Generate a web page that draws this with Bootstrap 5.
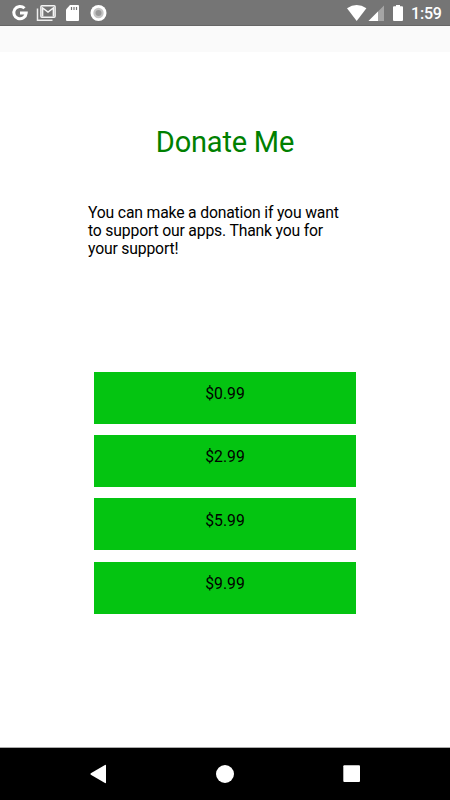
<!DOCTYPE html>
<html lang="en">
<head>
<meta charset="utf-8">
<meta name="viewport" content="width=device-width, initial-scale=1">
<title>Donate Me</title>
<link href="https://cdn.jsdelivr.net/npm/bootstrap@5.3.0/dist/css/bootstrap.min.css" rel="stylesheet">
<style>
body { font-family: Roboto, sans-serif; color: #000; background: #fff; }
.screen { width: 450px; height: 800px; }
.status-bar { height: 26px; background: #757575; border-bottom: 1px solid #666; }
.status-bar svg, .nav-keys svg { display: block; width: 100%; height: 100%; }
.status-left { width: 120px; }
.status-right { width: 66px; }
.clock { font-size: 16px; font-weight: 500; line-height: 28px; width: 39px; color: #fff; letter-spacing: -.2px; }
.app-strip { height: 26px; background: #fafafa; }
.donate-title { font-size: 29px; line-height: 36px; margin-top: 72px; color: #008000; font-weight: 400; letter-spacing: -.2px; }
.donate-text { font-size: 15.75px; line-height: 18px; width: 274px; margin-top: 44px; letter-spacing: -.18px; }
.price-list { width: 262px; margin-top: 113.6px; gap: 11.4px; }
.price-btn { height: 52px; padding: 11.2px 0 0; border: 0; border-radius: 0; background: #04c411; color: #000; font-size: 15.75px; line-height: 22px; }
.price-btn:hover { background: #04b010; color: #000; }
.nav-keys { height: 53px; background: #000; border-top: 1px solid #aaa; }
</style>
</head>
<body>
<div class="screen d-flex flex-column overflow-hidden">
  <header class="status-bar d-flex justify-content-between flex-shrink-0">
    <div class="status-left">
      <svg viewBox="0 0 120 25" fill="none">
        <path d="M24.5 8.3A6.2 6.2 0 1 0 26.2 13.1H20" stroke="#fff" stroke-width="3"/>
        <path d="M37.5 8.5V20.3H52.5" stroke="#eee" stroke-width="1.5"/>
        <rect x="40.9" y="5.7" width="14.2" height="11.6" rx="1" stroke="#f5f5f5" stroke-width="1.5"/>
        <path d="M42.6 16.5V8L48 12L53.4 8V16.5" stroke="#f5f5f5" stroke-width="1.5"/>
        <path d="M70 5H78Q79 5 79 6V20Q79 21 78 21H67Q66 21 66 20V9.4Z" fill="#fff"/>
        <path d="M71.5 7V10M74 7V10M76.5 7V10" stroke="#757575" stroke-width="1.2"/>
        <circle cx="98.5" cy="13" r="8" fill="#fff"/>
        <circle cx="98.5" cy="13" r="5.2" fill="#c4c4c4"/>
        <circle cx="98.5" cy="13" r="3" fill="#999"/>
      </svg>
    </div>
    <div class="d-flex">
      <div class="status-right">
        <svg viewBox="0 0 66 25">
          <path d="M11.7 21L2 8.2Q11.7 1.6 21.4 8.2Z" fill="#fff"/>
          <path d="M39 5.5V21H23.5Z" fill="#a5a5a5"/>
          <path d="M33 11.5V21H23.5Z" fill="#fff"/>
          <path d="M51 5H55V6.3H57Q58 6.3 58 7.3V20Q58 21 57 21H49Q48 21 48 20V7.3Q48 6.3 49 6.3H51Z" fill="#fff"/>
        </svg>
      </div>
      <div class="clock">1:59</div>
    </div>
  </header>
  <div class="app-strip flex-shrink-0"></div>
  <main class="flex-grow-1 d-flex flex-column align-items-center">
    <h1 class="donate-title mb-0 text-center">Donate Me</h1>
    <p class="donate-text mb-0">You can make a donation if you want<br>to support our apps. Thank you for<br>your support!</p>
    <div class="price-list d-flex flex-column">
      <button type="button" class="price-btn btn d-flex justify-content-center align-items-start">$0.99</button>
      <button type="button" class="price-btn btn d-flex justify-content-center align-items-start">$2.99</button>
      <button type="button" class="price-btn btn d-flex justify-content-center align-items-start">$5.99</button>
      <button type="button" class="price-btn btn d-flex justify-content-center align-items-start">$9.99</button>
    </div>
  </main>
  <nav class="nav-keys flex-shrink-0" aria-label="System navigation">
    <svg viewBox="0 0 450 52" fill="#fff">
      <path d="M105 17Q106 16.5 106 17.5V34.5Q106 35.5 105 35L90.8 26.8Q90 26 90.8 25.2Z"/>
      <circle cx="225" cy="26" r="9"/>
      <rect x="343.3" y="17.3" width="16.7" height="16.7" rx="1"/>
    </svg>
  </nav>
</div>
<script src="https://cdn.jsdelivr.net/npm/bootstrap@5.3.0/dist/js/bootstrap.bundle.min.js"></script>
</body>
</html>
